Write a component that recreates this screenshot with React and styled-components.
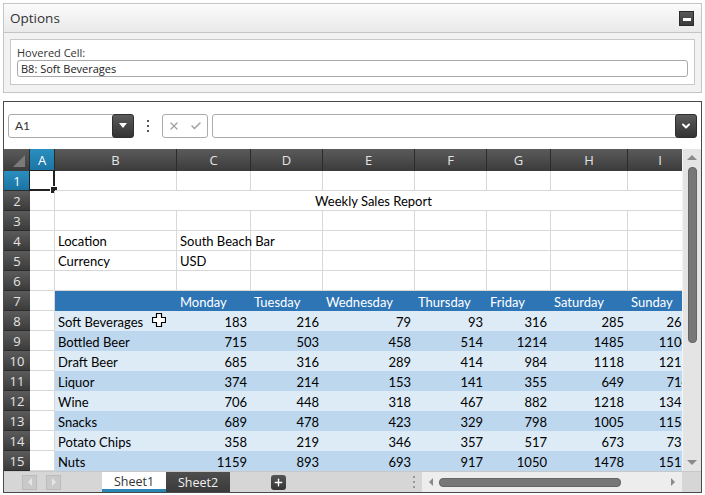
import React from "react";
import styled, { createGlobalStyle, css } from "styled-components";
import { X, Check, ChevronDown, Plus } from "lucide-react";

const GlobalStyle = createGlobalStyle`
  html, body {
    margin: 0;
    padding: 0;
    background: #ffffff;
    font-family: "Open Sans", "Noto Sans", sans-serif;
  }
  * { box-sizing: border-box; }
`;

const COLS = [25, 122, 74, 72, 92, 72, 64, 77, 65];
const LETTERS = ["A", "B", "C", "D", "E", "F", "G", "H", "I"];
const DAYS = ["Monday", "Tuesday", "Wednesday", "Thursday", "Friday", "Saturday", "Sunday"];
const DATA = [
  ["Soft Beverages", 183, 216, 79, 93, 316, 285, 263],
  ["Bottled Beer", 715, 503, 458, 514, 1214, 1485, 1104],
  ["Draft Beer", 685, 316, 289, 414, 984, 1118, 1213],
  ["Liquor", 374, 214, 153, 141, 355, 649, 714],
  ["Wine", 706, 448, 318, 467, 882, 1218, 1347],
  ["Snacks", 689, 478, 423, 329, 798, 1005, 1158],
  ["Potato Chips", 358, 219, 346, 357, 517, 673, 735],
  ["Nuts", 1159, 893, 693, 917, 1050, 1478, 1511],
];

const Page = styled.div`
  padding: 3px 3px 0 3px;
  display: flex;
  flex-direction: column;
  gap: 8px;
  width: 705px;
`;

/* options panel */
const Panel = styled.div`
  border: 1px solid #c4c4c4;
  background: #f2f2f2;
  height: 90px;
  display: flex;
  flex-direction: column;
`;
const PanelHead = styled.div`
  height: 29px;
  border-bottom: 1px solid #c4c4c4;
  background: linear-gradient(#fbfbfb, #e9e9e9);
  display: flex;
  align-items: center;
  justify-content: space-between;
  padding: 0 7px 0 6px;
  font-size: 13.5px;
  color: #333;
`;
const MinBtn = styled.div`
  width: 15px;
  height: 15px;
  background: linear-gradient(#5a5a5a, #3a3a3a);
  border: 1px solid #2a2a2a;
  display: flex;
  align-items: flex-end;
  justify-content: center;
  padding-bottom: 4px;
  &::after {
    content: "";
    width: 8px;
    height: 3px;
    background: #fff;
  }
`;
const PanelBody = styled.div`
  flex: 1;
  padding: 6px 6px 6px 6px;
`;
const InnerBox = styled.div`
  background: #fff;
  border: 1px solid #c8c8c8;
  height: 46px;
  padding: 6px 6px 0 6px;
  display: flex;
  flex-direction: column;
  gap: 1px;
`;
const Label = styled.div`
  font-size: 11px;
  color: #333;
  line-height: 13px;
`;
const TextInput = styled.div`
  height: 17px;
  border: 1px solid #a9a9a9;
  border-radius: 3px;
  padding: 0 3px;
  font-size: 11px;
  line-height: 15px;
  color: #222;
`;

/* spreadsheet */
const Sheet = styled.div`
  border: 1px solid #4a4a4a;
  height: 392px;
  display: flex;
  flex-direction: column;
  background: #fff;
`;
const FormulaBar = styled.div`
  height: 47px;
  display: flex;
  align-items: center;
  padding: 0 4px;
`;
const Box = styled.div`
  height: 24px;
  border: 1px solid #ababab;
  border-radius: 3px;
  display: flex;
  align-items: center;
  background: #fff;
  ${(p) => p.$w && css`width: ${p.$w}px;`}
  ${(p) => p.$grow && css`flex: 1; margin-left: 4px;`}
`;
const BoxText = styled.div`
  flex: 1;
  padding-left: 6px;
  font-size: 12px;
  color: #333;
  font-family: "Lato", sans-serif;
`;
const DropBtn = styled.div`
  width: 22px;
  height: 24px;
  margin: -1px -1px -1px 0;
  border-radius: 3px;
  background: linear-gradient(#5c5c5c, #333);
  border: 1px solid #2e2e2e;
  display: flex;
  align-items: center;
  justify-content: center;
  color: #fff;
`;
const Tri = styled.div`
  width: 0;
  height: 0;
  border-left: 4px solid transparent;
  border-right: 4px solid transparent;
  border-top: 5px solid #fff;
`;
const Dots = styled.div`
  width: ${(p) => p.$w || 28}px;
  align-self: center;
  display: flex;
  flex-direction: column;
  align-items: center;
  gap: 3px;
  span {
    width: 2px;
    height: 2px;
    background: ${(p) => p.$c || "#555"};
  }
`;
const IconSlot = styled.div`
  flex: 1;
  display: flex;
  justify-content: center;
  color: #a0a0a0;
`;

const GridArea = styled.div`
  height: 322px;
  display: flex;
`;
const Viewport = styled.div`
  flex: 1;
  overflow: hidden;
  font-family: "Lato", sans-serif;
  font-size: 13px;
`;
const Row = styled.div`
  display: flex;
  height: ${(p) => p.$h || 20}px;
`;
const headBg = css`
  background: linear-gradient(#5b5b5b, #3b3b3b);
  color: #e4e4e4;
`;
const selBg = css`
  background: linear-gradient(#2a8fc0, #1a74a3);
  color: #fff;
`;
const ColHead = styled.div`
  flex: none;
  width: ${(p) => p.$w}px;
  ${(p) => (p.$sel ? selBg : headBg)}
  border-right: 1px solid #2b2b2b;
  display: flex;
  align-items: center;
  justify-content: center;
  font-family: "Open Sans", sans-serif;
  font-size: 13px;
`;
const Corner = styled.div`
  flex: none;
  width: 26px;
  ${headBg}
  border-right: 1px solid #2b2b2b;
  position: relative;
  &::after {
    content: "";
    position: absolute;
    right: 4px;
    bottom: 4px;
    width: 12px;
    height: 12px;
    background: #7a7a7a;
    clip-path: polygon(100% 0, 100% 100%, 0 100%);
  }
`;
const RowHead = styled.div`
  flex: none;
  width: 26px;
  ${(p) => (p.$sel ? selBg : headBg)}
  border-bottom: 1px solid #2b2b2b;
  display: flex;
  align-items: center;
  justify-content: center;
  font-family: "Open Sans", sans-serif;
  font-size: 13px;
`;
const kinds = {
  plain: css`
    background: transparent;
    overflow: visible;
    border-right: 1px solid #d8d8d8;
    border-bottom: 1px solid #d8d8d8;
  `,
  merged: css`
    background: #fff;
    border-bottom: 1px solid #d8d8d8;
    justify-content: center;
  `,
  head: css`
    background: #2e75b6;
    color: #fff;
  `,
  light: css`
    background: #ddebf7;
  `,
  dark: css`
    background: #bdd7ee;
  `,
};
const Cell = styled.div`
  flex: none;
  width: ${(p) => p.$w}px;
  display: flex;
  align-items: center;
  padding: 1px 4px 0 3px;
  white-space: nowrap;
  overflow: hidden;
  color: #000;
  position: relative;
  ${(p) => kinds[p.$kind || "plain"]}
  ${(p) => p.$right && css`justify-content: flex-end;`}
  ${(p) =>
    p.$active &&
    css`
      &::before {
        content: "";
        position: absolute;
        left: -1px;
        top: -1px;
        right: -1px;
        bottom: -1px;
        border: 2px solid #222;
        border-left-width: 1px;
        border-top-width: 1px;
        pointer-events: none;
      }
      &::after {
        content: "";
        position: absolute;
        right: -4px;
        bottom: -4px;
        width: 6px;
        height: 6px;
        background: #222;
        border: 1px solid #fff;
      }
    `}
`;
const Cursor = styled.svg`
  position: absolute;
  left: 97px;
  top: 2px;
`;

const VScroll = styled.div`
  flex: none;
  width: 19px;
  background: #e4e4e4;
  border-left: 1px solid #f4f4f4;
  display: flex;
  flex-direction: column;
  align-items: center;
  padding: 6px 0 6px;
`;
const Arrow = styled.div`
  width: 0;
  height: 0;
  ${(p) =>
    p.$dir === "up" &&
    css`
      border-left: 5px solid transparent;
      border-right: 5px solid transparent;
      border-bottom: 5px solid #8a8a8a;
    `}
  ${(p) =>
    p.$dir === "down" &&
    css`
      border-left: 5px solid transparent;
      border-right: 5px solid transparent;
      border-top: 5px solid #8a8a8a;
    `}
  ${(p) =>
    p.$dir === "left" &&
    css`
      border-top: 4px solid transparent;
      border-bottom: 4px solid transparent;
      border-right: 4px solid ${p.$c || "#8a8a8a"};
    `}
  ${(p) =>
    p.$dir === "right" &&
    css`
      border-top: 4px solid transparent;
      border-bottom: 4px solid transparent;
      border-left: 4px solid ${p.$c || "#8a8a8a"};
    `}
`;
const VThumb = styled.div`
  width: 9px;
  height: 176px;
  margin-top: 7px;
  border-radius: 4px;
  background: #777;
  border: 1px solid #666;
`;
const Spacer = styled.div`
  flex: 1;
`;

const TabBar = styled.div`
  height: 21px;
  display: flex;
  align-items: stretch;
  background: #d6d6d6;
  border-top: 1px solid #c8c8c8;
`;
const NavArea = styled.div`
  width: 98px;
  display: flex;
  align-items: center;
  gap: 9px;
  padding-left: 18px;
`;
const NavBtn = styled.div`
  width: 15px;
  height: 15px;
  background: #c9c9c9;
  border: 1px solid #bcbcbc;
  display: flex;
  align-items: center;
  justify-content: center;
`;
const Tab = styled.div`
  width: 64px;
  display: flex;
  align-items: center;
  justify-content: center;
  font-family: "Open Sans", sans-serif;
  font-size: 12.5px;
  ${(p) =>
    p.$active
      ? css`
          background: #fff;
          color: #333;
          border-bottom: 3px solid #2a86b4;
          padding-top: 2px;
        `
      : css`
          background: linear-gradient(#4e4e4e, #3a3a3a);
          color: #f0f0f0;
        `}
`;
const AddBtn = styled.div`
  width: 15px;
  height: 15px;
  align-self: center;
  margin-left: 41px;
  border-radius: 3px;
  background: linear-gradient(#555, #353535);
  display: flex;
  align-items: center;
  justify-content: center;
  color: #fff;
`;
const HScroll = styled.div`
  width: 260px;
  background: #ededed;
  display: flex;
  align-items: center;
  padding: 0 7px 0 7px;
  gap: 6px;
`;
const HThumb = styled.div`
  width: 182px;
  height: 9px;
  border-radius: 4px;
  background: #777;
  border: 1px solid #666;
`;
const CornerBox = styled.div`
  width: 19px;
  background: #d6d6d6;
`;

function CursorIcon() {
  return (
    <Cursor width="14" height="14" viewBox="0 0 14 14">
      <path
        d="M4.5 0.5h5v4h4v5h-4v4h-5v-4h-4v-5h4z"
        fill="#fff"
        stroke="#000"
        strokeWidth="1.2"
        strokeLinejoin="round"
      />
    </Cursor>
  );
}

function GridRow({ n, children }) {
  return (
    <Row>
      <RowHead $sel={n === 1}>{n}</RowHead>
      {children}
    </Row>
  );
}

function PlainRow({ n, values = {} }) {
  return (
    <GridRow n={n}>
      {COLS.map((w, i) => (
        <Cell key={i} $w={w} $active={n === 1 && i === 0}>
          {values[i]}
        </Cell>
      ))}
    </GridRow>
  );
}

export default function App() {
  const mergedW = COLS.slice(1).reduce((a, b) => a + b, 0);
  return (
    <>
      <GlobalStyle />
      <Page>
        <Panel>
          <PanelHead>
            <span>Options</span>
            <MinBtn />
          </PanelHead>
          <PanelBody>
            <InnerBox>
              <Label>Hovered Cell:</Label>
              <TextInput>B8: Soft Beverages</TextInput>
            </InnerBox>
          </PanelBody>
        </Panel>

        <Sheet>
          <FormulaBar>
            <Box $w={126}>
              <BoxText>A1</BoxText>
              <DropBtn>
                <Tri />
              </DropBtn>
            </Box>
            <Dots>
              <span />
              <span />
              <span />
            </Dots>
            <Box $w={46}>
              <IconSlot>
                <X size={12} strokeWidth={2.5} />
              </IconSlot>
              <IconSlot>
                <Check size={12} strokeWidth={3} />
              </IconSlot>
            </Box>
            <Box $grow>
              <Spacer />
              <DropBtn>
                <ChevronDown size={12} strokeWidth={4} />
              </DropBtn>
            </Box>
          </FormulaBar>

          <GridArea>
            <Viewport>
              <Row $h={22}>
                <Corner />
                {COLS.map((w, i) => (
                  <ColHead key={i} $w={w} $sel={i === 0}>
                    {LETTERS[i]}
                  </ColHead>
                ))}
              </Row>
              <PlainRow n={1} />
              <GridRow n={2}>
                <Cell $w={COLS[0]} />
                <Cell $w={mergedW} $kind="merged">
                  Weekly Sales Report
                </Cell>
              </GridRow>
              <PlainRow n={3} />
              <PlainRow n={4} values={{ 1: "Location", 2: "South Beach Bar" }} />
              <PlainRow n={5} values={{ 1: "Currency", 2: "USD" }} />
              <PlainRow n={6} />
              <GridRow n={7}>
                <Cell $w={COLS[0]} />
                <Cell $w={COLS[1]} $kind="head" />
                {DAYS.map((d, i) => (
                  <Cell key={d} $w={COLS[i + 2]} $kind="head">
                    {d}
                  </Cell>
                ))}
              </GridRow>
              {DATA.map((r, ri) => {
                const kind = ri % 2 === 0 ? "light" : "dark";
                return (
                  <GridRow key={r[0]} n={ri + 8}>
                    <Cell $w={COLS[0]} />
                    <Cell $w={COLS[1]} $kind={kind}>
                      {r[0]}
                      {ri === 0 && <CursorIcon />}
                    </Cell>
                    {r.slice(1).map((v, i) => (
                      <Cell key={i} $w={COLS[i + 2]} $kind={kind} $right>
                        {v}
                      </Cell>
                    ))}
                  </GridRow>
                );
              })}
            </Viewport>
            <VScroll>
              <Arrow $dir="up" />
              <VThumb />
              <Spacer />
              <Arrow $dir="down" />
            </VScroll>
          </GridArea>

          <TabBar>
            <NavArea>
              <NavBtn>
                <Arrow $dir="left" $c="#e6e6e6" />
              </NavBtn>
              <NavBtn>
                <Arrow $dir="right" $c="#e6e6e6" />
              </NavBtn>
            </NavArea>
            <Tab $active>Sheet1</Tab>
            <Tab>Sheet2</Tab>
            <AddBtn>
              <Plus size={11} strokeWidth={3} />
            </AddBtn>
            <Spacer />
            <Dots $c="#999" $w={16}>
              <span />
              <span />
              <span />
            </Dots>
            <HScroll>
              <Arrow $dir="left" />
              <HThumb />
              <Spacer />
              <Arrow $dir="right" />
            </HScroll>
            <CornerBox />
          </TabBar>
        </Sheet>
      </Page>
    </>
  );
}
